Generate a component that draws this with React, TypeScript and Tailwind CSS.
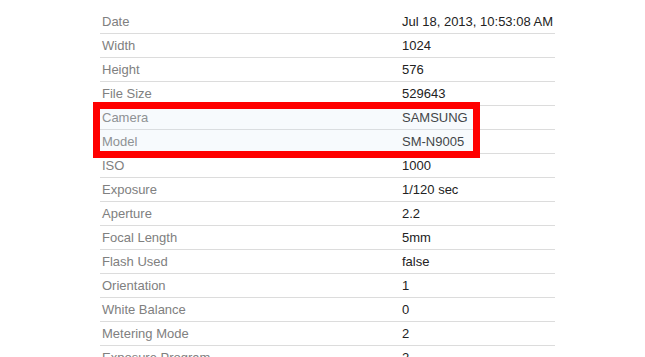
const rows: [string, string][] = [
  ["Date", "Jul 18, 2013, 10:53:08 AM"],
  ["Width", "1024"],
  ["Height", "576"],
  ["File Size", "529643"],
  ["Camera", "SAMSUNG"],
  ["Model", "SM-N9005"],
  ["ISO", "1000"],
  ["Exposure", "1/120 sec"],
  ["Aperture", "2.2"],
  ["Focal Length", "5mm"],
  ["Flash Used", "false"],
  ["Orientation", "1"],
  ["White Balance", "0"],
  ["Metering Mode", "2"],
  ["Exposure Program", "2"],
]

export default function App() {
  return (
    <div className="relative h-[357px] w-[645px] overflow-hidden bg-white pt-[10px] pl-[100px] font-['Liberation_Sans',Arial,sans-serif] text-[13px]">
      <div className="w-[455px]">
        {rows.map(([label, value]) => (
          <div key={label} className="flex h-[24px] items-center border-b border-[#dcdcdc]">
            <div className="w-[302px] pl-[2px] text-[#808080]">{label}</div>
            <div className="text-[#222]">{value}</div>
          </div>
        ))}
      </div>
      {/* highlight box over Camera / Model */}
      <div className="absolute left-[93px] top-[102px] h-[56px] w-[387px] border-[7px] border-[#f00] bg-[rgba(210,228,245,0.18)]" />
    </div>
  )
}
